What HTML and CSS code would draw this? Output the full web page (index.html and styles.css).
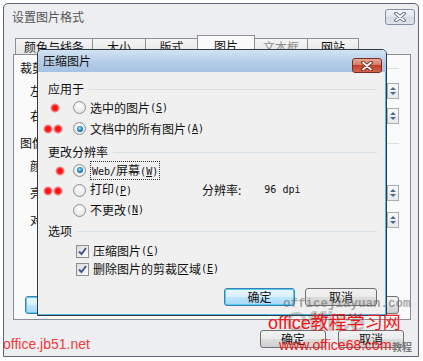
FILE: index.html
```html
<!DOCTYPE html>
<html lang="zh-CN">
<head>
    <meta charset="UTF-8">
    <title>设置图片格式 - 压缩图片</title>
    <link rel="stylesheet" href="styles.css">
</head>
<body>
    <div class="win">
        <div class="titlebar">
            <span class="title">设置图片格式</span>
            <span class="close-btn">
                <svg width="14" height="10" viewBox="0 0 14 10"><path d="M3 1.5 L11 8.5 M11 1.5 L3 8.5" stroke="#55606e" stroke-width="3.6" stroke-linecap="round"/><path d="M3 1.5 L11 8.5 M11 1.5 L3 8.5" stroke="#fff" stroke-width="1.8" stroke-linecap="round"/></svg>
            </span>
        </div>

        <div class="tabs">
            <span class="tab w77">颜色与线条</span>
            <span class="tab w53">大小</span>
            <span class="tab w52">版式</span>
            <span class="tab tab-on">图片</span>
            <span class="tab tab-off w53">文本框</span>
            <span class="tab w51">网站</span>
        </div>

        <div class="panel">
            <div class="group">裁剪<span class="rule"></span></div>
            <div class="prow">左<span class="spin"></span></div>
            <div class="prow">右<span class="spin"></span></div>
            <div class="group gap7">图像<span class="rule"></span></div>
            <div class="prow">颜色</div>
            <div class="prow">亮度<span class="spin"></span></div>
            <div class="prow">对比度<span class="spin"></span></div>
            <div class="pbtns">
                <span class="btn btn-focus w100">压缩图片(C)...</span>
                <span class="btn w71">重设(S)</span>
            </div>
        </div>

        <div class="footer">
            <span class="btn w66">确定</span>
            <span class="btn w66">取消</span>
        </div>

        <!-- 压缩图片 dialog on top of the format dialog -->
        <div class="dlg">
            <div class="dlg-title">
                <span>压缩图片</span>
                <span class="close-red">
                    <svg width="14" height="10" viewBox="0 0 14 10"><path d="M3 1.5 L11 8.5 M11 1.5 L3 8.5" stroke="#6b2418" stroke-width="3.6" stroke-linecap="round"/><path d="M3 1.5 L11 8.5 M11 1.5 L3 8.5" stroke="#fff" stroke-width="1.8" stroke-linecap="round"/></svg>
                </span>
            </div>
            <div class="dlg-body">
                <div class="head">应用于<span class="rule"></span></div>
                <div class="opt">
                    <span class="dot" style="left: 12px"></span>
                    <span class="radio"></span>选中的图片<span class="key">(<u>S</u>)</span>
                </div>
                <div class="opt">
                    <span class="dot" style="left: 5px"></span>
                    <span class="dot" style="left: 15px"></span>
                    <span class="radio on"></span>文档中的所有图片<span class="key">(<u>A</u>)</span>
                </div>

                <div class="head mt5">更改分辨率<span class="rule"></span></div>
                <div class="opt h20">
                    <span class="dot" style="left: 17px"></span>
                    <span class="radio on"></span><span class="focus"><span class="key">Web/</span>屏幕<span class="key">(<u>W</u>)</span></span>
                </div>
                <div class="opt h20">
                    <span class="dot" style="left: 5px"></span>
                    <span class="dot" style="left: 15px"></span>
                    <span class="radio"></span><span class="lbl">打印<span class="key">(<u>P</u>)</span></span>
                    <span>分辨率:</span><span class="key dpi">96 dpi</span>
                </div>
                <div class="opt h20">
                    <span class="radio"></span>不更改<span class="key">(<u>N</u>)</span>
                </div>

                <div class="head mt3">选项<span class="rule"></span></div>
                <div class="chk mt3">
                    <span class="box"><svg width="11" height="11" viewBox="0 0 11 11"><path d="M2 5.5 L4.5 8 L9 2" fill="none" stroke="#44588f" stroke-width="2"/></svg></span>压缩图片<span class="key">(<u>C</u>)</span>
                </div>
                <div class="chk">
                    <span class="box"><svg width="11" height="11" viewBox="0 0 11 11"><path d="M2 5.5 L4.5 8 L9 2" fill="none" stroke="#44588f" stroke-width="2"/></svg></span>删除图片的剪裁区域<span class="key">(<u>E</u>)</span>
                </div>

                <div class="dlg-btns">
                    <span class="btn btn-focus w71">确定</span>
                    <span class="btn w72">取消</span>
                </div>
            </div>
        </div>
    </div>

    <!-- watermarks burnt into the screenshot -->
    <div class="wm wm-jb51">office.jb51.net</div>
    <div class="wm wm-shadow">Office</div>
    <div class="wm wm-jiayuan">officejiayuan.com</div>
    <div class="wm wm-big">office教程学习网</div>
    <div class="wm wm-68">www.office68.com</div>
    <div class="wm wm-jc">教程</div>
</body>
</html>
```

FILE: styles.css
```css
body {
    margin: 0;
    width: 423px;
    height: 361px;
    background: #fff;
    font-family: "Noto Sans CJK SC", sans-serif;
    font-size: 12px;
    line-height: 16px;
    color: #111;
    overflow: hidden;
    position: relative;
}

/* outer window */
.win {
    position: relative;
    margin: 3px 0 0 3px;
    width: 416px;
    height: 354px;
    box-sizing: border-box;
    border: 1px solid #5d6670;
    border-radius: 5px 5px 0 0;
    background: #eceef1;
}
.titlebar {
    height: 30px;
    box-sizing: border-box;
    padding: 5px 3px 0 8px;
    display: flex;
    align-items: flex-start;
    justify-content: space-between;
}
.title {
    color: #555;
}
.close-btn {
    width: 30px;
    height: 16px;
    box-sizing: border-box;
    border: 1px solid #8390a1;
    border-radius: 3px;
    background: linear-gradient(#f3f5f8, #e0e5eb 50%, #d3dae3 50%, #e1e6ec);
    display: flex;
    align-items: center;
    justify-content: center;
}

.tabs {
    height: 20px;
    padding-left: 11px;
    display: flex;
    align-items: flex-end;
}
.tab {
    height: 16px;
    box-sizing: border-box;
    border: 1px solid #8e8f8f;
    border-bottom: none;
    margin-right: -1px;
    background: linear-gradient(#f5f5f5, #e6e6e6);
    display: flex;
    align-items: center;
    justify-content: center;
    line-height: 14px;
}
.tab-on {
    width: 58px;
    height: 20px;
    margin-bottom: -1px;
    background: #fafafa;
    position: relative;
    z-index: 1;
}
.tab-off {
    color: #8d8d8d;
}
.w51 { width: 52px; }
.w52 { width: 53px; }
.w53 { width: 54px; }
.w66 { width: 66px; }
.w71 { width: 71px; }
.w72 { width: 72px; }
.w77 { width: 78px; }
.w100 { width: 100px; }

.panel {
    margin-left: 9px;
    width: 398px;
    height: 266px;
    box-sizing: border-box;
    border: 1px solid #898c95;
    background: #fafafa;
    padding: 5px 11px 0 6px;
}
.group {
    height: 16px;
    display: flex;
    align-items: center;
}
.gap7 { margin-top: 7px; }
.rule {
    flex: 1;
    height: 1px;
    background: #d5dfe5;
    margin-left: 5px;
}
.prow {
    height: 24px;
    margin-top: 3px;
    padding-left: 10px;
    display: flex;
    align-items: center;
    justify-content: space-between;
}
.prow + .prow { margin-top: 1px; }
.prow:nth-child(n+5) { margin-top: 3px; }
.spin {
    position: relative;
    width: 12px;
    height: 16px;
    box-sizing: border-box;
    border: 1px solid #a9acb2;
    background: linear-gradient(#f7f7f7 50%, #e9eaec 50%);
}
.spin::before,
.spin::after {
    content: "";
    position: absolute;
    left: 2px;
    border: 3px solid transparent;
}
.spin::before {
    top: 0;
    border-bottom-color: #4f6a8f;
}
.spin::after {
    bottom: 0;
    border-top-color: #4f6a8f;
}
.pbtns {
    margin-top: 64px;
    padding-left: 5px;
    display: flex;
    justify-content: space-between;
    padding-right: -2px;
}

.footer {
    padding: 10px 14px 0 0;
    display: flex;
    justify-content: flex-end;
    gap: 12px;
}

.btn {
    height: 18px;
    box-sizing: border-box;
    border: 1px solid #707070;
    border-radius: 3px;
    background: linear-gradient(#f2f2f2, #ebebeb 50%, #dddddd 50%, #cfcfcf);
    display: flex;
    align-items: center;
    justify-content: center;
    line-height: 14px;
}
.btn-focus {
    border-color: #3c7fb1;
    box-shadow: inset 0 0 0 1px #55cdf5;
    background: linear-gradient(#eaf6fd, #d9f0fc 50%, #bee6fd 50%, #a7d9f5);
}

/* compress pictures dialog */
.dlg {
    position: absolute;
    left: 33px;
    top: 45px;
    width: 350px;
    height: 267px;
    box-sizing: border-box;
    border: 1px solid #2f3a46;
    border-radius: 5px 5px 0 0;
    background: #f0f0f0;
    box-shadow: inset -1px -1px 0 #4cb6e4;
    z-index: 2;
}
.dlg-title {
    height: 22px;
    box-sizing: border-box;
    padding: 0 4px 0 5px;
    border-radius: 4px 4px 0 0;
    background: linear-gradient(#d4e3f3, #b4cde8 55%, #a6c2e3);
    display: flex;
    align-items: center;
    justify-content: space-between;
}
.close-red {
    width: 30px;
    height: 15px;
    margin-top: 9px;
    box-sizing: border-box;
    border: 1px solid #7b2d20;
    border-radius: 3px;
    background: linear-gradient(#e8a898, #d47a66 45%, #c2402a 50%, #d2654c);
    display: flex;
    align-items: center;
    justify-content: center;
}
.dlg-body {
    padding: 9px 9px 0 10px;
}
.head {
    height: 16px;
    display: flex;
    align-items: center;
}
.mt3 { margin-top: 3px; }
.mt5 { margin-top: 5px; }
.opt {
    position: relative;
    height: 21px;
    margin-left: -10px;
    padding-left: 35px;
    display: flex;
    align-items: center;
}
.h20 { height: 20px; }
.radio {
    width: 13px;
    height: 13px;
    margin-right: 4px;
    flex: none;
    box-sizing: border-box;
    border: 1px solid #8e8f8f;
    border-radius: 50%;
    background: radial-gradient(circle at 50% 35%, #fff, #dedede);
    display: flex;
    align-items: center;
    justify-content: center;
}
.radio.on::after {
    content: "";
    width: 6px;
    height: 6px;
    border-radius: 50%;
    background: radial-gradient(circle at 45% 40%, #a6eaff, #2b8cc8 45%, #0d3c63);
}
.key {
    font-family: "DejaVu Sans Mono", monospace;
    font-size: 10px;
}
.focus {
    border: 1px dotted #333;
    padding: 0 1px;
    line-height: 15px;
}
.lbl {
    width: 112px;
}
.dpi {
    margin-left: 23px;
}
.dot {
    position: absolute;
    top: 6px;
    width: 10px;
    height: 10px;
    border-radius: 50%;
    background: radial-gradient(circle, #ff1010 30%, rgba(255, 40, 40, 0.55) 55%, rgba(255, 60, 60, 0) 72%);
}
.chk {
    height: 18px;
    padding-left: 28px;
    display: flex;
    align-items: center;
}
.box {
    width: 13px;
    height: 13px;
    margin-right: 4px;
    box-sizing: border-box;
    border: 1px solid #8e8f8f;
    background: linear-gradient(135deg, #dcdcdc, #fbfbfb);
    display: flex;
    align-items: center;
    justify-content: center;
}
.dlg-btns {
    margin-top: 10px;
    display: flex;
    justify-content: flex-end;
    gap: 10px;
}

/* watermarks */
.wm {
    position: absolute;
    z-index: 5;
    white-space: nowrap;
}
.wm-jb51 {
    left: 3px;
    top: 336px;
    font-family: "Liberation Sans", sans-serif;
    font-size: 14px;
    color: #f23a3a;
}
.wm-shadow {
    left: 286px;
    top: 314px;
    font-family: "Liberation Sans", sans-serif;
    font-weight: bold;
    font-size: 28px;
    color: rgba(90, 90, 90, 0.3);
}
.wm-jiayuan {
    left: 283px;
    top: 296px;
    font-family: "Liberation Mono", monospace;
    font-weight: bold;
    font-size: 12.5px;
    color: rgba(110, 110, 110, 0.6);
}
.wm-big {
    left: 268px;
    top: 312px;
    font-family: "Liberation Sans", "Noto Sans CJK SC", sans-serif;
    font-size: 18px;
    line-height: 22px;
    color: #f01818;
}
.wm-68 {
    left: 279px;
    top: 337px;
    font-family: "Liberation Sans", sans-serif;
    font-size: 14px;
    color: #f01818;
}
.wm-jc {
    left: 392px;
    top: 339px;
    font-size: 10px;
    font-weight: bold;
    color: #777;
}
```
